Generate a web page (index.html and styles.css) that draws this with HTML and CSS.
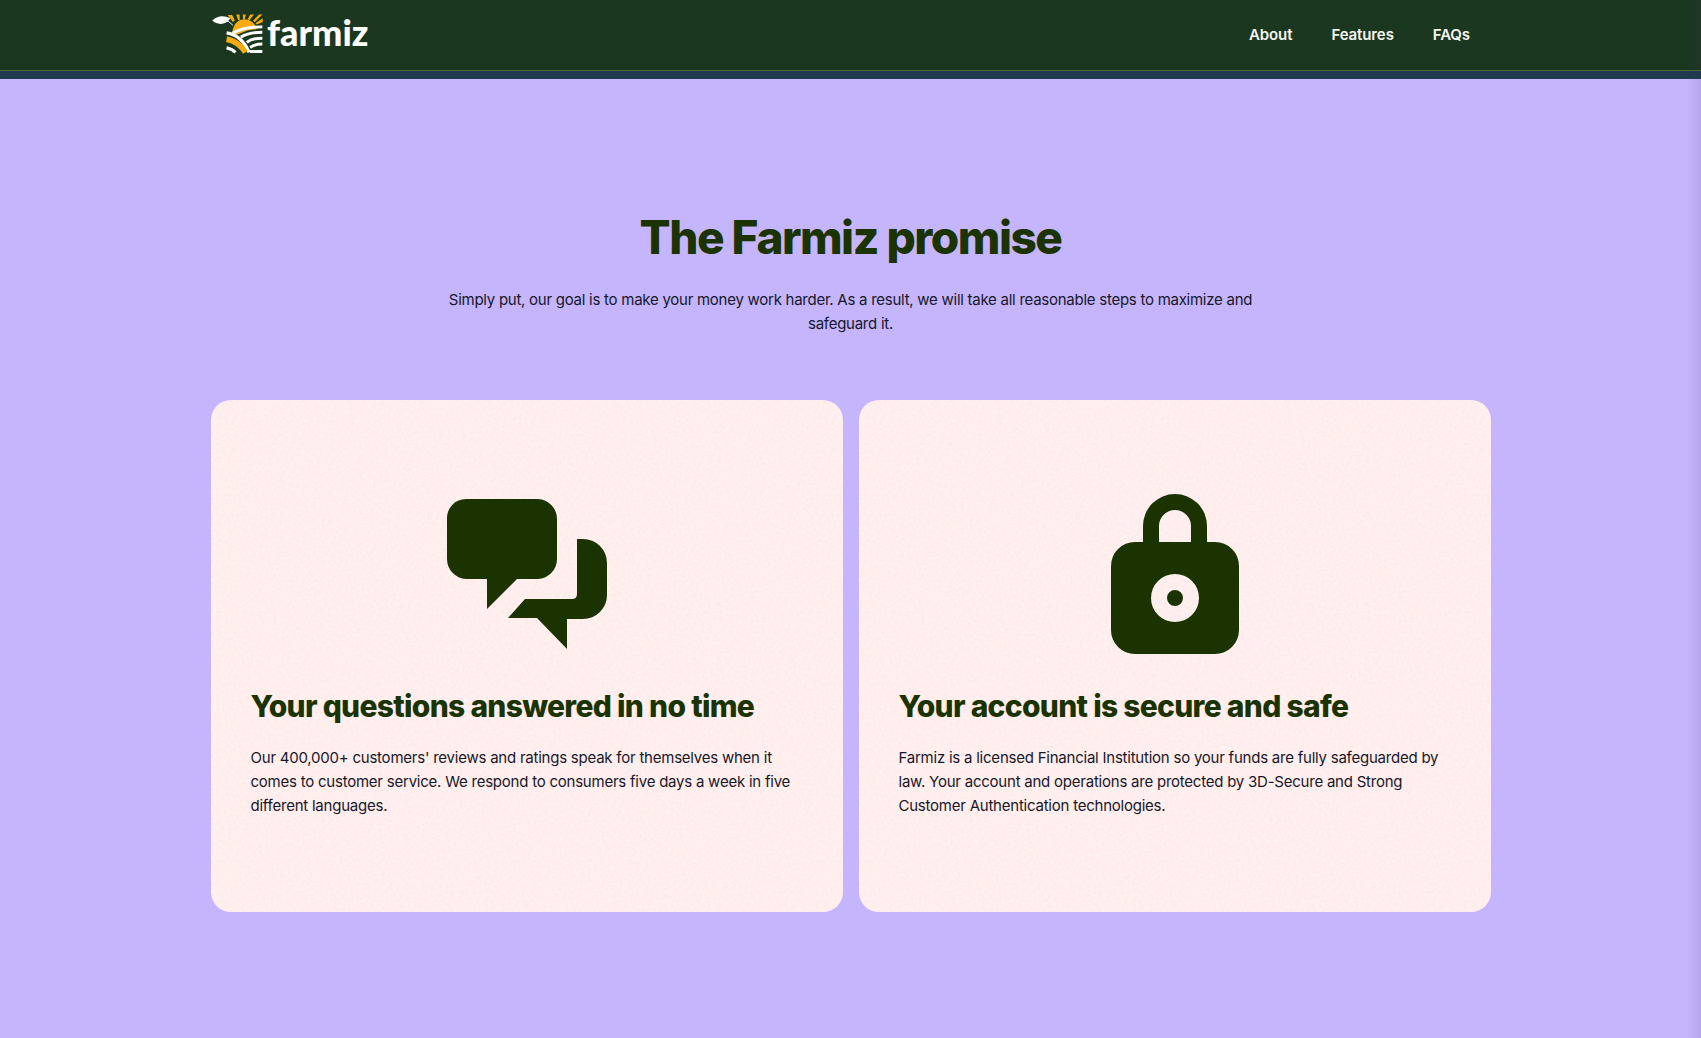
FILE: index.html
```html
<!DOCTYPE html>
<html lang="en">
<head>
    <meta charset="UTF-8">
    <meta name="viewport" content="width=device-width, initial-scale=1.0">
    <title>Farmiz</title>
    <link rel="stylesheet" href="styles.css">
</head>
<body>
    <header class="site-header">
        <div class="nav-bar">
            <a class="logo" href="#">
                <svg class="logo-mark" viewBox="60 40 160 122" width="53" height="41">
                    <path d="M64 62C76 48 98 44 118 55C108 74 80 78 64 62Z" fill="#fff"/>
                    <path d="M96 60Q116 62 126 76" fill="none" stroke="#fff" stroke-width="3"/>
                    <path d="M110 45H124L132 62L126 66ZM136 44H146L147 60H142ZM156 44H165L162 58H157ZM178 44H190L176 61L171 58ZM205 44H215L192 67L187 62ZM216 55V66L198 74L195 69Z" fill="#f5ac12"/>
                    <path d="M126 106A36 38 0 0 1 198 88L170 92L140 104Z" fill="#f5ac12"/>
                    <g fill="none">
                        <path d="M107 99C135 103 160 123 175 158" stroke="#fff" stroke-width="10"/>
                        <path d="M107 118C132 123 152 138 164 158" stroke="#f5ac12" stroke-width="17"/>
                        <path d="M107 144C118 147 128 152 134 158" stroke="#fff" stroke-width="9"/>
                        <path d="M125 100C150 86 185 81 215 81M150 112C170 100 195 97 215 97M168 128C180 118 200 115 215 115M178 143C190 135 205 133 215 133M178 155H215" stroke="#fff" stroke-width="9"/>
                    </g>
                </svg>
                <span class="logo-text">farmiz</span>
            </a>
            <nav class="nav-links">
                <a href="#">About</a>
                <a href="#">Features</a>
                <a href="#">FAQs</a>
            </nav>
        </div>
    </header>

    <main class="promise">
        <h1>The Farmiz promise</h1>
        <p class="intro">Simply put, our goal is to make your money work harder. As a result, we will take all reasonable steps to maximize and safeguard it.</p>

        <div class="cards">
            <section class="card">
                <div class="card-icon">
                    <svg viewBox="0 0 160 150" width="160" height="150">
                        <path d="M19 0H91A20 20 0 0 1 110 20V60A20 20 0 0 1 91 80H70L40 110V80H19A20 20 0 0 1 0 60V20A19 19 0 0 1 19 0Z" fill="#1b3300"/>
                        <path d="M130 40H136A24 24 0 0 1 160 64V96A24 24 0 0 1 136 120H120V150L90 119H61L78 100H125Q130 100 130 95Z" fill="#1b3300"/>
                    </svg>
                </div>
                <h2>Your questions answered in no time</h2>
                <p>Our 400,000+ customers' reviews and ratings speak for themselves when it comes to customer service. We respond to consumers five days a week in five different languages.</p>
            </section>
            <section class="card">
                <div class="card-icon">
                    <svg viewBox="0 0 128 160" width="128" height="160">
                        <path fill-rule="evenodd" d="M32 48V32A32 32 0 0 1 96 32V48H104A24 24 0 0 1 128 72V136A24 24 0 0 1 104 160H24A24 24 0 0 1 0 136V72A24 24 0 0 1 24 48ZM48 48H80V32A16 16 0 0 0 48 32ZM64 80A24 24 0 1 0 64 128A24 24 0 1 0 64 80ZM64 96A8 8 0 1 1 64 112A8 8 0 1 1 64 96Z" fill="#1b3300"/>
                    </svg>
                </div>
                <h2>Your account is secure and safe</h2>
                <p>Farmiz is a licensed Financial Institution so your funds are fully safeguarded by law. Your account and operations are protected by 3D-Secure and Strong Customer Authentication technologies.</p>
            </section>
        </div>
    </main>
</body>
</html>
```
FILE: styles.css
```css
* {
    box-sizing: border-box;
}
html, body {
    height: 100%;
}
body {
    margin: 0;
    font-family: "Inter", "Liberation Sans", sans-serif;
    background-color: #c4b5fd;
    color: #17172a;
    overflow: hidden;
}
/* faint shadow down the right edge of the window */
body::after {
    content: "";
    position: fixed;
    top: 0;
    right: 0;
    bottom: 0;
    width: 14px;
    background: linear-gradient(to right, rgba(60,40,90,0), rgba(60,40,90,0.1));
}
a {
    color: inherit;
    text-decoration: none;
}
.site-header {
    height: 79px;
    background-color: #1f3b4c;
}
.nav-bar {
    height: 71px;
    padding: 0 211px;
    display: flex;
    align-items: center;
    justify-content: space-between;
    background-color: #1c3720;
    border-bottom: 1px solid #4a663a;
}
.logo {
    display: flex;
    align-items: center;
    margin-top: -3px;
    color: white;
}
.logo-mark {
    display: block;
}
.logo-text {
    font-family: "Lato", sans-serif;
    font-size: 36px;
    font-weight: 900;
    margin: -3px 0 0 3px;
}
.nav-links {
    display: flex;
    gap: 39px;
    margin: -2px 20px 0 0;
    font-size: 15px;
    font-weight: 600;
    letter-spacing: -0.1px;
    color: #f5f5f0;
}
.promise {
    width: 1280px;
    margin: 0 auto;
    padding-top: 130px;
}
h1 {
    margin: 0;
    color: #1b3300;
    font-size: 46px;
    font-weight: 800;
    letter-spacing: -1.5px;
    line-height: 56px;
    text-align: center;
}
.intro {
    width: 820px;
    margin: 23px auto 0;
    font-size: 15px;
    letter-spacing: -0.26px;
    line-height: 24px;
    text-align: center;
}
.cards {
    display: grid;
    grid-template-columns: 1fr 1fr;
    gap: 16px;
    margin-top: 64px;
}
.card {
    height: 512px;
    padding: 94px 40px 0;
    border-radius: 20px;
    background-color: #ffebea;
    background-image: url("data:image/svg+xml,%3Csvg xmlns='http://www.w3.org/2000/svg' width='300' height='300'%3E%3Cfilter id='n'%3E%3CfeTurbulence type='fractalNoise' baseFrequency='0.35' numOctaves='3' stitchTiles='stitch'/%3E%3CfeColorMatrix values='0 0 0 0 1 0 0 0 0 1 0 0 0 0 1 0 0 0 0.9 -0.3'/%3E%3C/filter%3E%3Crect width='300' height='300' filter='url(%23n)'/%3E%3C/svg%3E");
}
.card-icon {
    height: 160px;
    display: flex;
    align-items: center;
    justify-content: center;
}
.card h2 {
    margin: 32px 0 0;
    color: #1b3300;
    font-size: 30px;
    font-weight: 800;
    letter-spacing: -0.7px;
    line-height: 40px;
}
.card p {
    margin: 20px 0 0;
    font-size: 15px;
    letter-spacing: -0.23px;
    line-height: 24px;
}
```
